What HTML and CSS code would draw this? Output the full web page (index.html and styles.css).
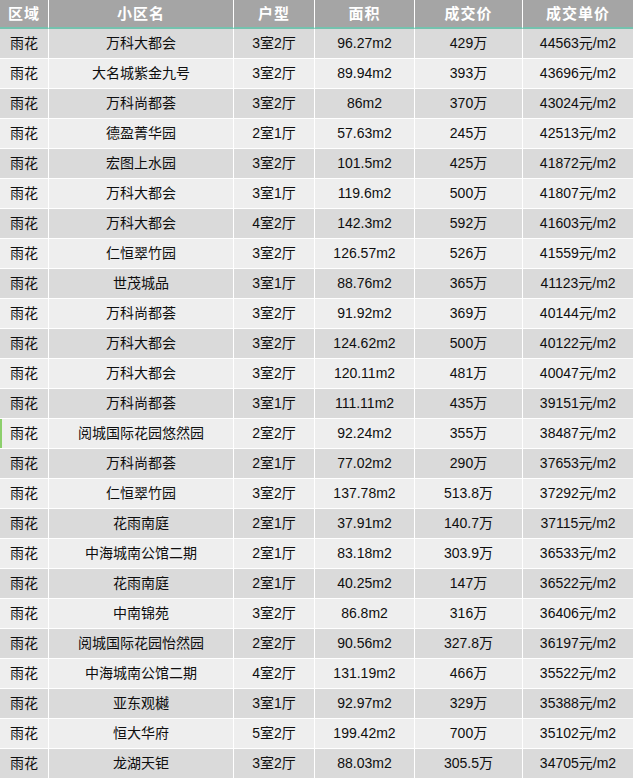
FILE: index.html
```html
<!DOCTYPE html>
<html lang="zh-CN">
<head>
<meta charset="utf-8">
<title>成交记录</title>
<link rel="stylesheet" href="styles.css">
</head>
<body>
<table class="deals">
  <colgroup>
    <col class="c-area"><col class="c-name"><col class="c-type"><col class="c-size"><col class="c-price"><col class="c-unit">
  </colgroup>
  <thead>
    <tr><th>区域</th><th>小区名</th><th>户型</th><th>面积</th><th>成交价</th><th>成交单价</th></tr>
  </thead>
  <tbody>
    <tr><td>雨花</td><td>万科大都会</td><td>3室2厅</td><td>96.27m2</td><td>429万</td><td>44563元/m2</td></tr>
    <tr><td>雨花</td><td>大名城紫金九号</td><td>3室2厅</td><td>89.94m2</td><td>393万</td><td>43696元/m2</td></tr>
    <tr><td>雨花</td><td>万科尚都荟</td><td>3室2厅</td><td>86m2</td><td>370万</td><td>43024元/m2</td></tr>
    <tr><td>雨花</td><td>德盈菁华园</td><td>2室1厅</td><td>57.63m2</td><td>245万</td><td>42513元/m2</td></tr>
    <tr><td>雨花</td><td>宏图上水园</td><td>3室2厅</td><td>101.5m2</td><td>425万</td><td>41872元/m2</td></tr>
    <tr><td>雨花</td><td>万科大都会</td><td>3室1厅</td><td>119.6m2</td><td>500万</td><td>41807元/m2</td></tr>
    <tr><td>雨花</td><td>万科大都会</td><td>4室2厅</td><td>142.3m2</td><td>592万</td><td>41603元/m2</td></tr>
    <tr><td>雨花</td><td>仁恒翠竹园</td><td>3室2厅</td><td>126.57m2</td><td>526万</td><td>41559元/m2</td></tr>
    <tr><td>雨花</td><td>世茂城品</td><td>3室1厅</td><td>88.76m2</td><td>365万</td><td>41123元/m2</td></tr>
    <tr><td>雨花</td><td>万科尚都荟</td><td>3室2厅</td><td>91.92m2</td><td>369万</td><td>40144元/m2</td></tr>
    <tr><td>雨花</td><td>万科大都会</td><td>3室2厅</td><td>124.62m2</td><td>500万</td><td>40122元/m2</td></tr>
    <tr><td>雨花</td><td>万科大都会</td><td>3室2厅</td><td>120.11m2</td><td>481万</td><td>40047元/m2</td></tr>
    <tr><td>雨花</td><td>万科尚都荟</td><td>3室1厅</td><td>111.11m2</td><td>435万</td><td>39151元/m2</td></tr>
    <tr class="marked"><td>雨花</td><td>阅城国际花园悠然园</td><td>2室2厅</td><td>92.24m2</td><td>355万</td><td>38487元/m2</td></tr>
    <tr><td>雨花</td><td>万科尚都荟</td><td>2室1厅</td><td>77.02m2</td><td>290万</td><td>37653元/m2</td></tr>
    <tr><td>雨花</td><td>仁恒翠竹园</td><td>3室2厅</td><td>137.78m2</td><td>513.8万</td><td>37292元/m2</td></tr>
    <tr><td>雨花</td><td>花雨南庭</td><td>2室1厅</td><td>37.91m2</td><td>140.7万</td><td>37115元/m2</td></tr>
    <tr><td>雨花</td><td>中海城南公馆二期</td><td>2室1厅</td><td>83.18m2</td><td>303.9万</td><td>36533元/m2</td></tr>
    <tr><td>雨花</td><td>花雨南庭</td><td>2室1厅</td><td>40.25m2</td><td>147万</td><td>36522元/m2</td></tr>
    <tr><td>雨花</td><td>中南锦苑</td><td>3室2厅</td><td>86.8m2</td><td>316万</td><td>36406元/m2</td></tr>
    <tr><td>雨花</td><td>阅城国际花园怡然园</td><td>2室2厅</td><td>90.56m2</td><td>327.8万</td><td>36197元/m2</td></tr>
    <tr><td>雨花</td><td>中海城南公馆二期</td><td>4室2厅</td><td>131.19m2</td><td>466万</td><td>35522元/m2</td></tr>
    <tr><td>雨花</td><td>亚东观樾</td><td>3室1厅</td><td>92.97m2</td><td>329万</td><td>35388元/m2</td></tr>
    <tr><td>雨花</td><td>恒大华府</td><td>5室2厅</td><td>199.42m2</td><td>700万</td><td>35102元/m2</td></tr>
    <tr><td>雨花</td><td>龙湖天钜</td><td>3室2厅</td><td>88.03m2</td><td>305.5万</td><td>34705元/m2</td></tr>
  </tbody>
</table>
</body>
</html>
```
FILE: styles.css
```css
html, body {
  margin: 0;
  padding: 0;
  background: #ffffff;
}

.deals {
  width: 633px;
  table-layout: fixed;
  border-collapse: separate;
  border-spacing: 0;
  font-family: "Liberation Sans", "Noto Sans CJK SC", sans-serif;
  font-size: 14px;
  color: #0e0e0e;
}

.c-area { width: 49px; }
.c-name { width: 185px; }
.c-type { width: 81px; }
.c-size { width: 100px; }
.c-price { width: 108px; }
.c-unit { width: 110px; }

.deals th,
.deals td {
  padding: 0;
  text-align: center;
  white-space: nowrap;
  overflow: hidden;
  border-right: 1px solid #ffffff;
}

.deals th:last-child,
.deals td:last-child {
  border-right: none;
}

.deals th {
  background: #a5a5a5;
  color: #ffffff;
  font-family: "Noto Sans CJK SC", sans-serif;
  font-weight: bold;
  font-size: 15px;
  letter-spacing: 1px;
  line-height: 25px;
  border-bottom: 2px solid #74c2ae;
  box-sizing: border-box;
}

.deals thead tr th {
  height: 27px;
  padding-bottom: 2px;
}

.deals td {
  height: 29px;
  line-height: 29px;
  border-bottom: 1px solid #ffffff;
  background: #dadada;
}

.deals tbody tr:nth-child(even) td {
  background: #eeeeee;
}

.deals tr.marked td:first-child {
  box-shadow: inset 2px 0 0 #8ccf6c;
}
```
